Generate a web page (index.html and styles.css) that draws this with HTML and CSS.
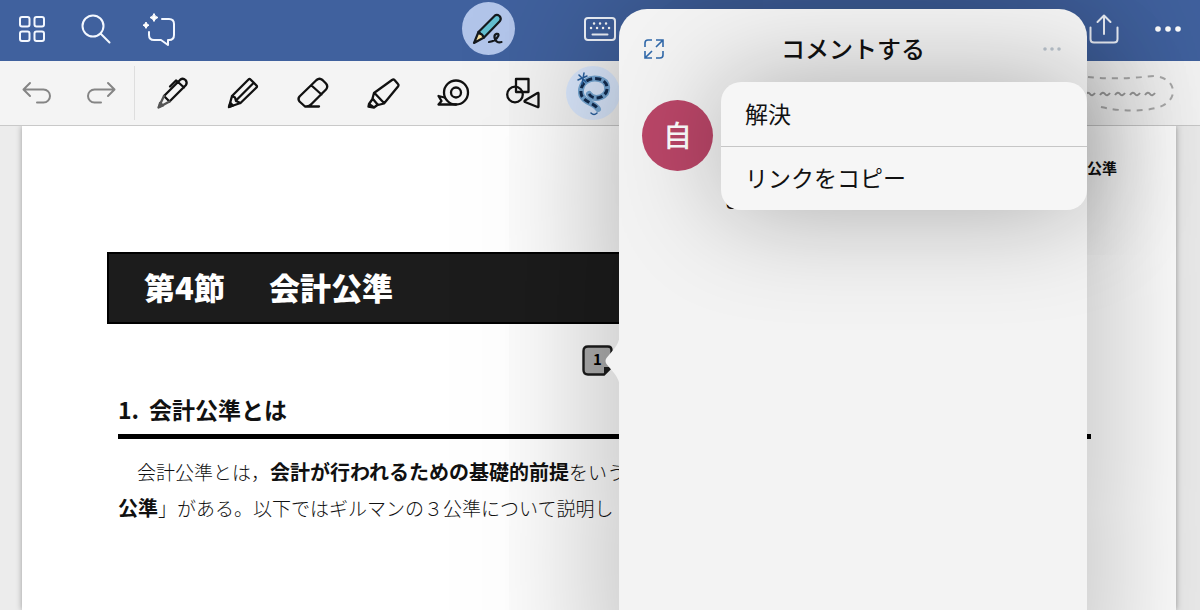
FILE: index.html
```
<!DOCTYPE html>
<html lang="ja">
<head>
<meta charset="utf-8">
<title>会計公準</title>
<link rel="stylesheet" href="styles.css">
</head>
<body>
<div class="app">
  <header class="navbar">
    <div class="nav-group">
      <button class="nav-btn" aria-label="Library"><svg width="28" height="28" viewBox="0 0 28 28"><g class="line"><rect x="2" y="2" width="9.500" height="9.500" rx="2"/><rect x="16.500" y="2" width="9.500" height="9.500" rx="2"/><rect x="2" y="16.500" width="9.500" height="9.500" rx="2"/><rect x="16.500" y="16.500" width="9.500" height="9.500" rx="2"/></g></svg></button>
      <button class="nav-btn" aria-label="Search"><svg width="32" height="32" viewBox="0 0 32 32"><g class="line"><circle cx="13" cy="13" r="10.500"/><path d="M20.500 20.500 29.500 29.500"/></g></svg></button>
      <button class="nav-btn" aria-label="Assistant"><svg width="36" height="36" viewBox="0 0 36 36"><g class="line"><path d="M20 8h7q5 0 5 5v11q0 5-5 5h-1v5l-7-5h-7q-5 0-5-5v-3"/></g><path class="solid" d="M12 2.500q.8 3.300 4 4-3.200.8-4 4-.8-3.200-4-4 3.200-.7 4-4zM4 11q.6 2.600 3 3.200-2.400.7-3 3.200-.6-2.500-3-3.200 2.400-.6 3-3.200z" stroke="#fff"/></svg></button>
    </div>
    <div class="nav-modes">
      <button class="mode-btn" aria-label="Draw"><span class="mode-disc"><svg width="36" height="36" viewBox="0 0 36 36"><g stroke="#15191d" stroke-width="2.200" stroke-linejoin="round" stroke-linecap="round"><path fill="#63bfd0" d="M8.500 21 25 4.500q2-1.500 4.500.5 2.200 2.500.5 5L14 26.500z"/><path fill="#f6dfa0" d="m8.500 21-4.500 11 10-5.500q-1-1-2-3-2-.5-3.500-2.500z"/><path d="M19 31q7-1 9.500-6.500c.5-3-4.500-2-4 2 .5 4 3.500 5.500 7 4.500" fill="none"/></g></svg></span></button>
      <button class="mode-btn" aria-label="Keyboard"><svg width="34" height="26" viewBox="0 0 34 26"><g class="line"><rect x="2" y="2" width="30" height="22" rx="3"/><path d="M9.500 18.500h15"/></g><path d="M11 7.500h.1M17 7.500h.1M23 7.500h.1M8 12h.1M14 12h.1M20 12h.1M26 12h.1" stroke="#fff" stroke-width="2.400" stroke-linecap="round"/></svg></button>
      <span></span>
    </div>
    <div class="nav-group nav-end">
      <button class="nav-btn" aria-label="Share"><svg width="32" height="32" viewBox="0 0 32 32"><g class="line"><path d="M2.500 14.500V26q0 3.500 3.500 3.500h20q3.500 0 3.500-3.500V14.500M16 21V2.500M9.500 9 16 2.500 22.500 9"/></g></svg></button>
      <button class="nav-btn" aria-label="More"><svg width="28" height="8" viewBox="0 0 28 8"><g class="solid"><circle cx="4" cy="4" r="2.800"/><circle cx="14" cy="4" r="2.800"/><circle cx="24" cy="4" r="2.800"/></g></svg></button>
    </div>
  </header>

  <div class="toolbar">
    <div class="history">
      <button class="tool history-btn" aria-label="Undo"><svg width="32" height="28" viewBox="0 0 32 28"><path d="M9 4 2.500 10.500 9 17M3 10.500h19.500a6.500 6.500 0 0 1 0 13H16"/></svg></button>
      <button class="tool history-btn" aria-label="Redo"><svg width="32" height="28" viewBox="0 0 32 28"><path d="m23 4 6.500 6.500L23 17M29 10.500H9.500a6.500 6.500 0 0 0 0 13H16"/></svg></button>
    </div>
    <div class="tools">
      <button class="tool" aria-label="Pen"><svg width="34" height="34" viewBox="0 0 34 34"><path d="M8 20 24.500 3.500q2.500-1.800 5 .5 2 2.500.5 5L13.500 25.500zM22 6l6 5.500M14 10.500 20 4.500l2 1.500"/><path class="nib" d="m8 20-5.500 11.500L13.500 25.500"/><path class="nib-tip" d="m4 27 3 2.500-4 1.500z"/></svg></button>
      <button class="tool" aria-label="Pencil"><svg width="34" height="34" viewBox="0 0 34 34"><path d="M6 20 22.500 3.500q1-1 2 0l6 6q1 1 0 2L14.500 27 3 31zM6 20l3 1.500 1 3.500 4.500 2M10 24.500 26.500 8"/><path class="ink" d="m4.500 27 2.500 2.500-4 1.500z"/></svg></button>
      <button class="tool" aria-label="Eraser"><svg width="34" height="34" viewBox="0 0 34 34"><path d="m3.500 20.500 17-16.500q3-2.500 6 0l3.500 3.500q2.500 3 0 6L15.500 28q-2 2.500-5 2.500H9l-5.500-5q-2-2.500 0-5zM15.500 9.500 25.500 18.500M9 30.500h14"/></svg></button>
      <button class="tool" aria-label="Highlighter"><svg width="34" height="34" viewBox="0 0 34 34"><path d="m8 17 18-13q1.500-1 2.500 0l3.500 4q1 1 0 2.500L18 27.500l-6 1.500-5.500-6.500zM9 17.500l9 9.500M6.500 23l-3.500 5 5 3.500 4-3M3 28l-.5 2.500 5.500 1"/></svg></button>
      <button class="tool" aria-label="Tape"><svg width="34" height="30" viewBox="0 0 34 30"><circle cx="20" cy="14.500" r="12"/><circle cx="20" cy="14.500" r="5"/><path d="M20 26.500H2.500l3-3.500L2.500 18l6 1.500"/></svg></button>
      <button class="tool" aria-label="Shapes"><svg width="36" height="34" viewBox="0 0 36 34"><path d="M11 3h12.500v13H11zM20 24.500l12.500-7.500q1-.5 1 .5v13q0 1-1 .5L20 26q-1-.8 0-1.500z"/><circle cx="10" cy="18.500" r="7.800"/></svg></button>
      <button class="tool" aria-label="Lasso" aria-pressed="true"><span class="tool-disc"><svg width="44" height="46" viewBox="0 0 44 46"><path class="rope" d="M18 24q4 6 12 3c9-4 8-16-2-18-9-2-19 3-18 14 1 9 14 10 17 16"/><path class="rope-dash" d="M18 24q4 6 12 3c9-4 8-16-2-18-9-2-19 3-18 14 1 9 14 10 17 16"/><path class="knot" d="m8 5 7 7M13 3l-2 11M7 10l9-4M20 43q3 3 6 0"/></svg></span></button>
    </div>
    <svg class="lasso-hint" width="130" height="42" viewBox="0 0 130 42"><path stroke-dasharray="6 6" d="M6 5h36q28 3 66-1c24 2 26 26 2 32q-26 6-60-2"/><path class="squiggle" d="M39 23q3-4 5-1t5-1M54 23q3-4 5-1t5-1M69 23q3-4 5-1t5-1M84 23q3-4 5-1t5-1M99 23q3-4 5-1t5-1"/></svg>
  </div>

  <main class="canvas">
    <article class="page">
      <p class="running-head">第4節　会計公準</p>
      <h1 class="chapter"><span>第4節</span><span>会計公準</span></h1>
      <h2 class="section"><span>1.</span><span>会計公準とは</span></h2>
      <p class="prose">　会計公準とは，<strong>会計が行われるための基礎的前提</strong>をいう<br><strong>公準</strong>」がある。以下ではギルマンの３公準について説明し</p>
    </article>
  </main>

  <svg class="marker" width="31" height="31" viewBox="0 0 31 31"><path d="M6 1.500h20q3.500 0 3.500 3.500v17L22 29.500H6q-4.500 0-4.500-4.500V6Q1.500 1.500 6 1.500z" fill="#b0b0b0" stroke="#1c1c1c" stroke-width="2.400"/><path d="M22 29.500V22h7.500z" fill="#1c1c1c"/><text x="11" y="20">1</text></svg>

  <section class="popover" aria-label="コメントする">
    <svg class="beak" width="16" height="52" viewBox="0 0 16 52"><path d="M16 0Q15 8 10 14L2.500 23q-2 3 0 6L10 38q5 6 6 14z" fill="#f3f3f3"/></svg>
    <header class="popover-head">
      <button class="head-btn" aria-label="Expand"><svg width="22" height="22" viewBox="0 0 22 22"><path d="M9 2H5Q2 2 2 5v4M13 20h4q3 0 3-3v-4M13 2h7v7M20 2l-7 7M9 20H2v-7M2 20l7-7" fill="none" stroke="#3169aa" stroke-width="1.600"/></svg></button>
      <h2 class="popover-title">コメントする</h2>
      <button class="head-btn" aria-label="More"><svg width="20" height="6" viewBox="0 0 20 6"><g fill="#b9c2cb"><circle cx="3" cy="3" r="1.800"/><circle cx="10" cy="3" r="1.800"/><circle cx="17" cy="3" r="1.800"/></g></svg></button>
    </header>
    <div class="comment">
      <span class="avatar">自</span>
      <p class="comment-text">します</p>
    </div>
    <div class="menu">
      <button class="menu-item">解決</button>
      <button class="menu-item">リンクをコピー</button>
    </div>
  </section>
</div>
</body>
</html>
```
FILE: styles.css
```
* { box-sizing: border-box; }
body {
  margin: 0;
  font-family: "Noto Sans CJK JP", sans-serif;
  color: #111;
}
button {
  border: 0;
  padding: 0;
  background: none;
  font: inherit;
  color: inherit;
}
h1, h2, p { margin: 0; }
svg { display: block; }

.app {
  position: relative;
  display: flex;
  flex-direction: column;
  height: 100vh;
  overflow: hidden;
  background: #ececec;
}

/* Top bar */
.navbar {
  display: grid;
  grid-template-columns: 1fr 336px 1fr;
  height: 61px;
  padding-bottom: 4px;
  background: #40619e;
}
.nav-group { display: flex; }
.nav-end { justify-content: flex-end; }
.nav-btn {
  display: grid;
  place-items: center;
  width: 64px;
}
.nav-modes {
  display: grid;
  grid-template-columns: repeat(3, 1fr);
}
.mode-btn {
  display: grid;
  place-items: center;
}
.mode-disc {
  display: grid;
  place-items: center;
  width: 53px;
  height: 53px;
  border-radius: 50%;
  background: #b2c5ea;
}
.line {
  fill: none;
  stroke: #f4f8ff;
  stroke-width: 2;
  stroke-linecap: round;
  stroke-linejoin: round;
}
.solid { fill: #fff; }

/* Tool row */
.toolbar {
  display: flex;
  align-items: center;
  height: 65px;
  background: #f4f4f4;
  border-bottom: 1px solid #c9c9c9;
}
.history {
  display: flex;
  width: 135px;
  height: 54px;
  padding-left: 5px;
  border-right: 1px solid #dedede;
}
.tools {
  display: flex;
  height: 54px;
  padding-left: 3px;
}
.tool {
  display: grid;
  place-items: center;
  width: 70px;
}
.history-btn { width: 64px; }
.tool svg {
  fill: none;
  stroke: #111;
  stroke-width: 2.3;
  stroke-linecap: round;
  stroke-linejoin: round;
}
.history-btn svg {
  stroke: #858585;
  stroke-width: 2;
}
.nib { stroke: #555; }
.nib-tip { fill: #555; stroke: #555; }
.ink { fill: #111; }
.tool-disc {
  display: grid;
  place-items: center;
  width: 54px;
  height: 54px;
  border-radius: 50%;
  background: #dceaff;
}
.rope {
  stroke: #77a9d6;
  stroke-width: 6;
}
.rope-dash {
  stroke: #122c50;
  stroke-width: 3;
  stroke-linecap: butt;
  stroke-dasharray: 6 3;
}
.knot {
  stroke: #28609f;
  stroke-width: 1.5;
}
.lasso-hint {
  margin-left: auto;
  margin-right: 24px;
  fill: none;
  stroke: #aaa;
  stroke-width: 2;
}
.squiggle { stroke: #999; }

/* Document */
.canvas {
  flex: 1;
  min-height: 0;
  padding: 0 24px 0 22px;
}
.page {
  height: 100%;
  padding: 30px 59px 0 96px;
  background: #fff;
  box-shadow: 0 0 6px rgba(0, 0, 0, .35);
  clip-path: inset(0 -8px 0 -8px);
}
.running-head {
  text-align: right;
  font-size: 15px;
  line-height: 24px;
  font-weight: 700;
}
.chapter {
  display: flex;
  align-items: center;
  gap: 44px;
  height: 72px;
  margin: 72px 34px 0 -11px;
  padding: 0 0 2px 35px;
  background: #1c1c1c;
  border: 2px solid #000;
  color: #fff;
  font-size: 31px;
  line-height: 40px;
  font-weight: 900;
}
.section {
  display: flex;
  gap: 10px;
  margin: 68px 26px 0 0;
  padding-bottom: 8px;
  border-bottom: 5px solid #000;
  font-size: 23px;
  line-height: 34px;
  font-weight: 700;
}
.prose {
  margin-top: 15px;
  font-size: 19px;
  line-height: 36px;
  font-weight: 300;
  white-space: nowrap;
}
.prose strong {
  font-size: 20px;
  font-weight: 700;
}

/* Comment pin on the page */
.marker {
  position: absolute;
  top: 345px;
  right: 587px;
}
.marker text {
  font-size: 15px;
  font-weight: 700;
}

/* Comment popover */
.popover {
  position: absolute;
  top: 9px;
  right: 113px;
  bottom: -160px;
  width: 468px;
  border-radius: 28px;
  background: #f3f3f3;
  box-shadow: 0 0 160px rgba(0, 0, 0, .34);
}
.beak {
  position: absolute;
  top: 326px;
  left: -15px;
}
.popover-head {
  display: grid;
  grid-template-columns: 70px 1fr 70px;
  height: 80px;
}
.head-btn {
  display: grid;
  place-items: center;
}
.popover-title {
  text-align: center;
  font-size: 24px;
  line-height: 78px;
  font-weight: 500;
}
.comment {
  display: flex;
  gap: 9px;
  padding: 11px 23px;
}
.avatar {
  flex: none;
  width: 71px;
  height: 71px;
  border-radius: 50%;
  background: #ba4668;
  color: #fff;
  font-size: 29px;
  line-height: 68px;
  font-weight: 500;
  text-align: center;
}
.comment-text {
  padding-top: 84px;
  font-size: 20px;
  line-height: 32px;
}
.menu {
  position: absolute;
  top: 73px;
  right: 0;
  width: 366px;
  border-radius: 20px;
  background: #f6f6f6;
  box-shadow: 0 0 110px rgba(0, 0, 0, .3);
}
.menu-item {
  display: block;
  width: 100%;
  height: 64px;
  padding: 0 0 3px 24px;
  font-size: 23px;
  text-align: left;
}
.menu-item + .menu-item { border-top: 1px solid #c6c6c6; }
```
